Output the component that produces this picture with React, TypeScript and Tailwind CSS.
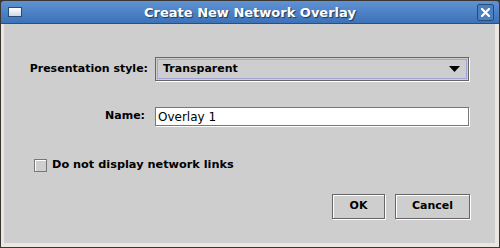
import React from "react";

export default function App() {
  const font = { fontFamily: '"DejaVu Sans", "Liberation Sans", sans-serif' };
  return (
    <div className="w-[500px] h-[248px] bg-[#3a3632] flex flex-col" style={font}>
      {/* title bar */}
      <div className="h-[23px] mx-px mt-px rounded-t-[3px] bg-gradient-to-b from-[#5f93d3] to-[#3e72b8] border-b border-[#2b4f80] flex items-center relative">
        <div className="absolute left-[7px] top-[6px] w-[14px] h-[10px] border border-[#2a4a78] bg-gradient-to-b from-white to-[#cfd8e4]" />
        <div className="flex-1 text-center text-white font-bold text-[13px] [text-shadow:1px_1px_1px_#1c3658] leading-none">
          Create New Network Overlay
        </div>
        <div className="absolute right-[5px] top-[3px] w-[17px] h-[17px] rounded-[2px] border border-[#2a4a78] bg-[#4a7fc2] flex items-center justify-center">
          <svg width="9" height="9" viewBox="0 0 9 9">
            <path d="M1 1 L8 8 M8 1 L1 8" stroke="white" strokeWidth="2.2" strokeLinecap="square" />
          </svg>
        </div>
      </div>
      {/* body frame */}
      <div className="flex-1 mx-px mb-px bg-[#ebe7e0] pl-[3px] pr-[4px] pb-[4px] pt-0 flex">
        <div className="flex-1 bg-[#cecece] flex flex-col text-[11px] text-black">
          <div className="h-[33px]" />
          {/* presentation style row */}
          <div className="flex items-center h-[24px]">
            <div className="w-[151px] text-right pr-[7px] font-bold">Presentation style:</div>
            <div className="w-[314px] h-[24px] border border-[#666] shadow-[1px_1px_0_#fff] p-px">
              <div className="h-full border border-[#a4a4d6] flex items-center pl-[5px] pr-[6px] font-bold">
                <span className="flex-1">Transparent</span>
                <svg width="11" height="6" viewBox="0 0 11 6">
                  <path d="M0 0 H11 L5.5 6 Z" fill="black" />
                </svg>
              </div>
            </div>
          </div>
          <div className="h-[26px]" />
          {/* name row */}
          <div className="flex items-center h-[19px]">
            <div className="w-[151px] text-right pr-[10px] font-bold">Name:</div>
            <div className="w-[314px] h-[19px] bg-white border border-[#777] shadow-[1px_1px_0_#fff] flex items-center pl-[2px] text-[12px]">
              Overlay 1
            </div>
          </div>
          <div className="h-[31px]" />
          {/* checkbox */}
          <div className="flex items-center h-[14px] pl-[30px] mt-px">
            <div className="w-[13px] h-[13px] border border-[#777] bg-[#cecece] shadow-[inset_1px_1px_0_#fff]" />
            <span className="ml-[5px] font-bold text-[11.3px]">Do not display network links</span>
          </div>
          <div className="h-[22px]" />
          {/* buttons */}
          <div className="flex justify-end pr-[25px] gap-[10px]">
            <button className="w-[53px] h-[25px] border border-[#666] shadow-[1px_1px_0_#fff,inset_1px_1px_0_#fff] bg-[#cecece] font-bold text-[11px]">
              OK
            </button>
            <button className="w-[75px] h-[25px] border border-[#666] shadow-[1px_1px_0_#fff,inset_1px_1px_0_#fff] bg-[#cecece] font-bold text-[11px]">
              Cancel
            </button>
          </div>
        </div>
      </div>
    </div>
  );
}
